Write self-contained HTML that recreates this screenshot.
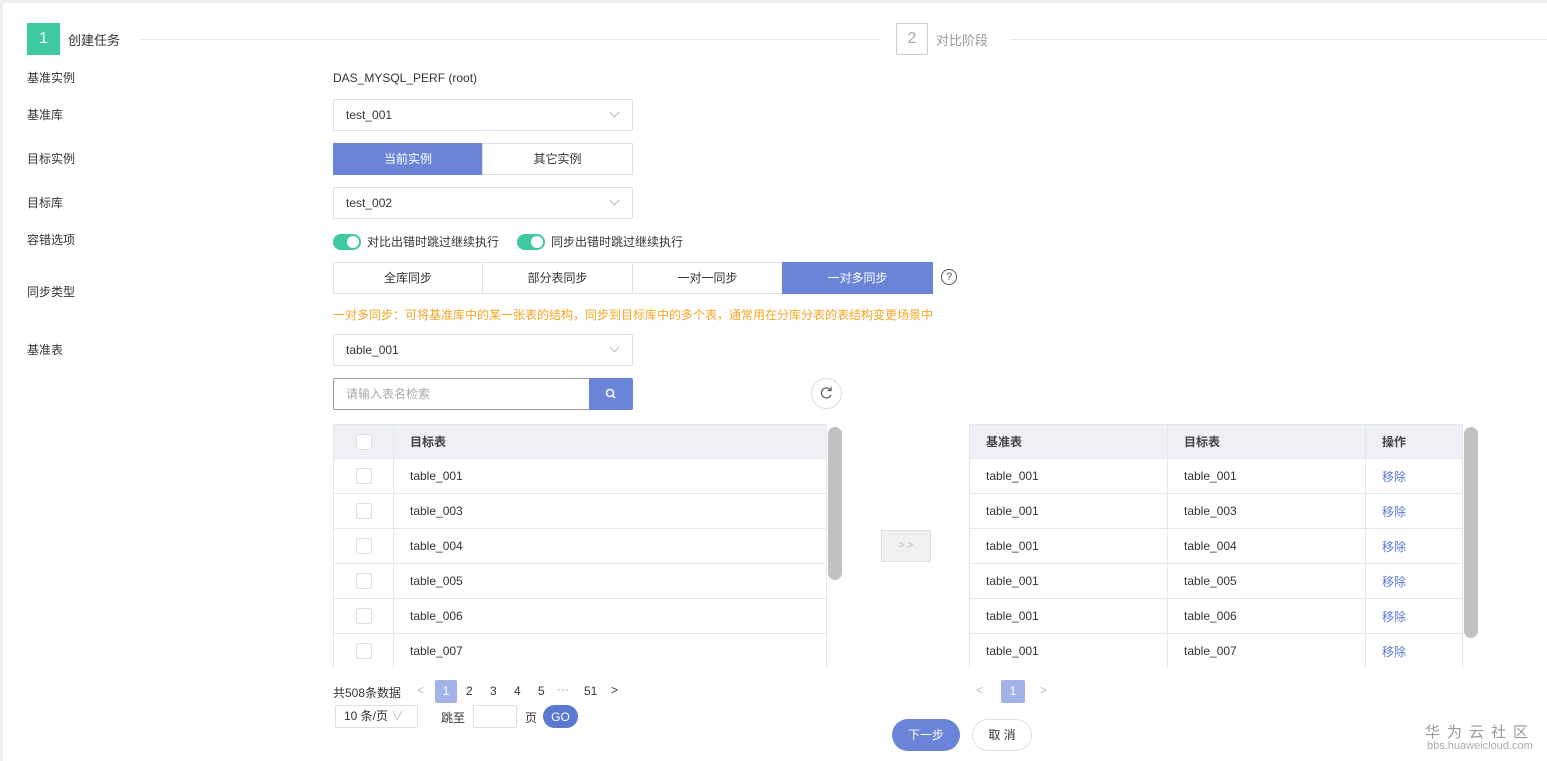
<!DOCTYPE html>
<html><head><meta charset="utf-8"><style>
*{box-sizing:border-box;margin:0;padding:0}
body{width:1547px;height:761px;position:relative;background:#fff;font-family:"Liberation Sans","Noto Sans CJK SC",sans-serif;font-size:12px;color:#333;overflow:hidden}
.a{position:absolute}
.lbl{position:absolute;left:27px;font-size:12px;color:#333;line-height:14px}
.sel{position:absolute;left:333px;width:300px;height:32px;border:1px solid #dcdfe6;border-radius:2px;padding-left:12px;line-height:30px;color:#333}
.sel:after{content:"";position:absolute;right:14px;top:9px;width:6px;height:6px;border-right:1px solid #bbb;border-bottom:1px solid #bbb;transform:rotate(45deg)}
.btn{position:absolute;height:32px;border:1px solid #dcdfe6;text-align:center;line-height:30px;color:#333;background:#fff}
.on{background:#6a84d8;color:#fff;border-color:#6a84d8}
.tog{position:absolute;width:28px;height:16px;border-radius:8px;background:#3ec9a0}
.tog:after{content:"";position:absolute;right:2px;top:2px;width:12px;height:12px;border-radius:50%;background:#fff}
table{border-collapse:collapse;position:absolute}
td,th{border:1px solid #e4e7ed;height:35px;text-align:left;font-weight:normal;padding-left:16px;color:#333}
th{background:#eef0f5;height:34px;font-weight:bold;color:#444}
.cb{display:inline-block;width:16px;height:16px;border:1px solid #dcdfe6;background:#fff;border-radius:2px;vertical-align:middle}
.lk{color:#5b78d4}
</style></head><body>
<div class="a" style="left:0;top:0;width:1547px;height:3px;background:#eef0f4"></div>
<div class="a" style="left:0;top:0;width:3px;height:761px;background:#eef0f4"></div>
<div class="a" style="left:27px;top:23px;width:33px;height:32px;background:#3ec9a0;color:#fff;font-size:16px;text-align:center;line-height:32px">1</div>
<div class="a" style="left:68px;top:30px;font-size:13px;color:#333">创建任务</div>
<div class="a" style="left:140px;top:39px;width:740px;height:1px;background:#e4e7ed"></div>
<div class="a" style="left:896px;top:23px;width:32px;height:32px;border:1px solid #ccc;color:#aaa;font-size:16px;text-align:center;line-height:30px">2</div>
<div class="a" style="left:936px;top:30px;font-size:13px;color:#999">对比阶段</div>
<div class="a" style="left:1010px;top:39px;width:537px;height:1px;background:#e4e7ed"></div>

<div class="lbl" style="top:71px">基准实例</div>
<div class="a" style="left:333px;top:71px">DAS_MYSQL_PERF (root)</div>
<div class="lbl" style="top:108px">基准库</div>
<div class="sel" style="top:99px">test_001</div>
<div class="lbl" style="top:152px">目标实例</div>
<div class="btn on" style="left:333px;top:143px;width:150px">当前实例</div>
<div class="btn" style="left:482px;top:143px;width:151px">其它实例</div>
<div class="lbl" style="top:196px">目标库</div>
<div class="sel" style="top:187px">test_002</div>
<div class="lbl" style="top:233px">容错选项</div>
<div class="tog" style="left:333px;top:234px"></div>
<div class="a" style="left:367px;top:233px">对比出错时跳过继续执行</div>
<div class="tog" style="left:517px;top:234px"></div>
<div class="a" style="left:551px;top:233px">同步出错时跳过继续执行</div>
<div class="lbl" style="top:285px">同步类型</div>
<div class="btn" style="left:333px;top:262px;width:150px">全库同步</div>
<div class="btn" style="left:482px;top:262px;width:151px">部分表同步</div>
<div class="btn" style="left:632px;top:262px;width:151px">一对一同步</div>
<div class="btn on" style="left:782px;top:262px;width:151px">一对多同步</div>
<div class="a" style="left:941px;top:269px;width:16px;height:16px;border:1px solid #555;border-radius:50%;text-align:center;line-height:14px;font-size:11px;color:#555">?</div>
<div class="a" style="left:333px;top:306px;color:#f5a623">一对多同步：可将基准库中的某一张表的结构，同步到目标库中的多个表，通常用在分库分表的表结构变更场景中</div>
<div class="lbl" style="top:343px">基准表</div>
<div class="sel" style="top:334px">table_001</div>
<div class="a" style="left:333px;top:378px;width:257px;height:32px;border:1px solid #999;border-radius:2px 0 0 2px;padding-left:12px;line-height:30px;color:#aaa">请输入表名检索</div>
<div class="a" style="left:589px;top:378px;width:44px;height:32px;background:#6a84d8;border-radius:0 2px 2px 0">
<svg width="44" height="32"><circle cx="21" cy="15" r="3.5" fill="none" stroke="#fff" stroke-width="1.5"/><path d="M23.5 17.5L26 20" stroke="#fff" stroke-width="1.5"/></svg></div>
<div class="a" style="left:811px;top:378px;width:31px;height:31px;border:1px solid #ddd;border-radius:50%">
<svg width="29" height="29"><path d="M18.5 11A5 5 0 1 0 19 16" fill="none" stroke="#555" stroke-width="1.2"/><path d="M19 8v3.5h-3.5" fill="none" stroke="#555" stroke-width="1.2"/></svg></div>

<table style="left:333px;top:424px;width:494px">
<tr><th style="width:60px;padding:0;text-align:center"><span class="cb"></span></th><th>目标表</th></tr>
<tr><td style="padding:0;text-align:center"><span class="cb"></span></td><td>table_001</td></tr>
<tr><td style="padding:0;text-align:center"><span class="cb"></span></td><td>table_003</td></tr>
<tr><td style="padding:0;text-align:center"><span class="cb"></span></td><td>table_004</td></tr>
<tr><td style="padding:0;text-align:center"><span class="cb"></span></td><td>table_005</td></tr>
<tr><td style="padding:0;text-align:center"><span class="cb"></span></td><td>table_006</td></tr>
<tr><td style="padding:0;text-align:center"><span class="cb"></span></td><td>table_007</td></tr>
</table>
<div class="a" style="left:333px;top:668px;width:495px;height:12px;background:#fff"></div>
<div class="a" style="left:828px;top:427px;width:14px;height:153px;background:#c1c1c1;border-radius:7px"></div>

<div class="a" style="left:881px;top:530px;width:50px;height:32px;background:#f0f0f0;border:1px solid #ddd;color:#bbb;text-align:center;line-height:30px;font-size:10px">&gt; &gt;</div>

<table style="left:969px;top:424px;width:494px">
<tr><th style="width:198px">基准表</th><th style="width:198px">目标表</th><th>操作</th></tr>
<tr><td>table_001</td><td>table_001</td><td class="lk">移除</td></tr>
<tr><td>table_001</td><td>table_003</td><td class="lk">移除</td></tr>
<tr><td>table_001</td><td>table_004</td><td class="lk">移除</td></tr>
<tr><td>table_001</td><td>table_005</td><td class="lk">移除</td></tr>
<tr><td>table_001</td><td>table_006</td><td class="lk">移除</td></tr>
<tr><td>table_001</td><td>table_007</td><td class="lk">移除</td></tr>
</table>
<div class="a" style="left:969px;top:668px;width:495px;height:12px;background:#fff"></div>
<div class="a" style="left:1464px;top:427px;width:14px;height:211px;background:#c1c1c1;border-radius:7px"></div>

<div class="a" style="left:333px;top:684px">共508条数据</div>
<div class="a" style="left:417px;top:683px;color:#bbb">&lt;</div>
<div class="a" style="left:435px;top:680px;width:22px;height:23px;background:#a3b3e8;color:#fff;text-align:center;line-height:23px;border-radius:2px">1</div>
<div class="a" style="left:466px;top:684px">2</div>
<div class="a" style="left:490px;top:684px">3</div>
<div class="a" style="left:514px;top:684px">4</div>
<div class="a" style="left:538px;top:684px">5</div>
<div class="a" style="left:557px;top:682px;color:#999">···</div>
<div class="a" style="left:584px;top:684px">51</div>
<div class="a" style="left:611px;top:683px">&gt;</div>
<div class="a" style="left:335px;top:705px;width:83px;height:23px;border:1px solid #dcdfe6;border-radius:2px;padding-left:8px;line-height:21px">10 条/页 <span style="color:#bbb">∨</span></div>
<div class="a" style="left:441px;top:709px">跳至</div>
<div class="a" style="left:473px;top:705px;width:44px;height:23px;border:1px solid #dcdfe6;border-radius:2px"></div>
<div class="a" style="left:525px;top:709px">页</div>
<div class="a" style="left:543px;top:705px;width:35px;height:23px;border-radius:12px;background:#5b78d4;color:#fff;text-align:center;line-height:24px">GO</div>

<div class="a" style="left:976px;top:683px;color:#bbb">&lt;</div>
<div class="a" style="left:1001px;top:680px;width:24px;height:23px;background:#a3b3e8;color:#fff;text-align:center;line-height:23px;border-radius:2px">1</div>
<div class="a" style="left:1040px;top:683px;color:#bbb">&gt;</div>

<div class="a" style="left:892px;top:719px;width:68px;height:32px;border-radius:16px;background:#6a84d8;color:#fff;text-align:center;line-height:32px">下一步</div>
<div class="a" style="left:972px;top:719px;width:60px;height:32px;border-radius:16px;border:1px solid #dcdfe6;text-align:center;line-height:30px">取 消</div>

<div class="a" style="left:1425px;top:721px;font-size:15px;color:#999;letter-spacing:7px">华为云社区</div>
<div class="a" style="left:1427px;top:740px;font-size:11px;color:#aaa">bbs.huaweicloud.com</div>
</body></html>
